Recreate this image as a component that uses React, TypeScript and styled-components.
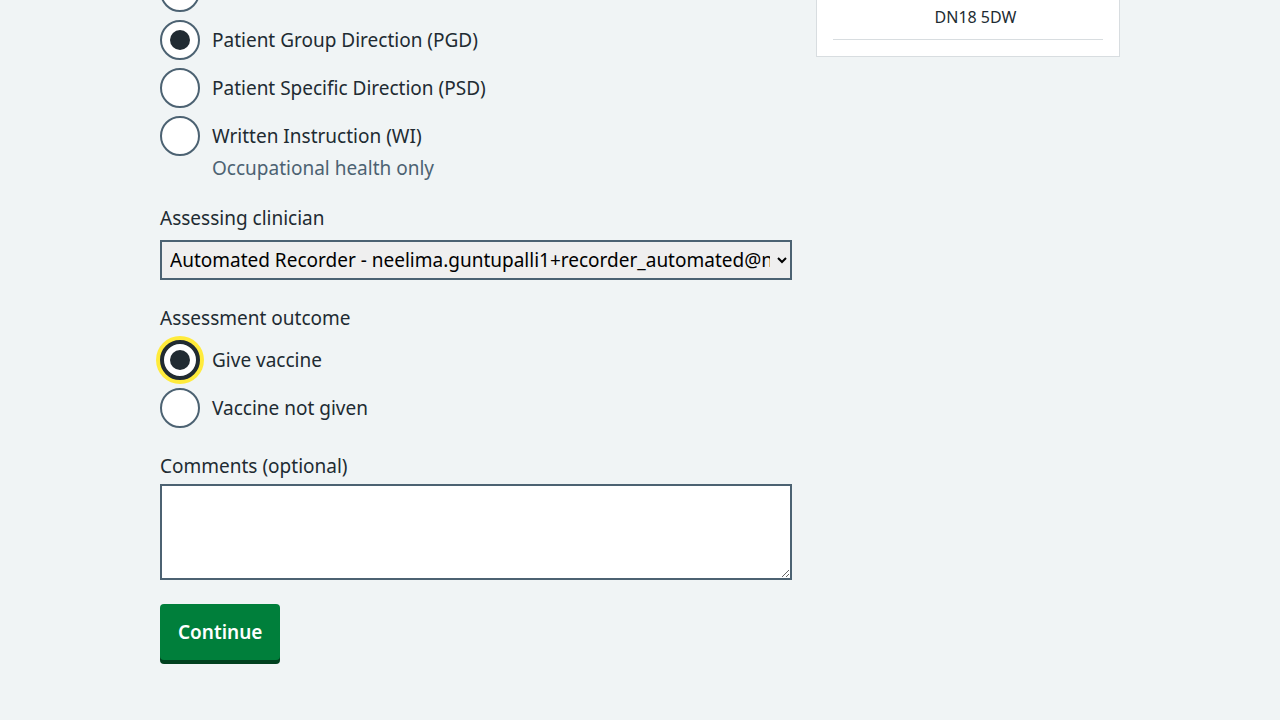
import React from "react";
import styled, { createGlobalStyle, css } from "styled-components";

const Global = createGlobalStyle`
  html, body { margin: 0; padding: 0; }
  body {
    background: #f0f4f5;
    color: #212b32;
    font-family: "Noto Sans", "Open Sans", Arial, sans-serif;
    overflow: hidden;
  }
  * { box-sizing: border-box; }
`;

const Page = styled.div`
  width: 960px;
  margin: -64px auto 0;
  display: grid;
  grid-template-columns: 632px 304px;
  column-gap: 24px;
  align-items: start;
`;

const Main = styled.form`
  display: flex;
  flex-direction: column;
  padding-bottom: 40px;
`;

const FormGroup = styled.div`
  display: flex;
  flex-direction: column;
  margin-bottom: 24px;
`;

const Label = styled.label<{ $gap?: number }>`
  font-size: 19px;
  line-height: 28px;
  margin-bottom: ${(p) => p.$gap ?? 8}px;
`;

const RadioList = styled.div`
  display: flex;
  flex-direction: column;
  gap: 8px;
`;

const RadioItem = styled.div`
  display: flex;
  flex-direction: column;
`;

const RadioRow = styled.label`
  display: flex;
  align-items: center;
  gap: 12px;
  font-size: 19px;
  line-height: 28px;
`;

const Circle = styled.span<{ $checked?: boolean; $focus?: boolean }>`
  width: 40px;
  height: 40px;
  flex: none;
  border-radius: 50%;
  background: #fff;
  border: 2px solid #4c6272;
  display: flex;
  align-items: center;
  justify-content: center;
  ${(p) =>
    p.$focus &&
    css`
      border: 4px solid #212b32;
      box-shadow: 0 0 0 4px #ffeb3b;
    `}
  &::after {
    content: "";
    width: 20px;
    height: 20px;
    border-radius: 50%;
    background: #212b32;
    display: ${(p) => (p.$checked ? "block" : "none")};
  }
`;

const Hint = styled.div`
  color: #4c6272;
  font-size: 19px;
  line-height: 24px;
  padding-left: 52px;
`;

const Select = styled.select`
  width: 100%;
  height: 40px;
  border: 2px solid #4c6272;
  background-color: #efefef;
  color: #000;
  font-family: inherit;
  font-size: 19px;
  padding: 0 4px;
  border-radius: 0;
`;

const TextArea = styled.textarea`
  width: 100%;
  height: 96px;
  border: 2px solid #4c6272;
  background: #fff;
  font-family: inherit;
  font-size: 19px;
  border-radius: 0;
  display: block;
`;

const Button = styled.button`
  align-self: flex-start;
  background: #007f3b;
  color: #fff;
  border: none;
  border-radius: 4px;
  box-shadow: 0 4px 0 #00401e;
  font-family: inherit;
  font-weight: 600;
  font-size: 19px;
  line-height: 28px;
  padding: 14px 18px;
  cursor: pointer;
`;

const Card = styled.aside`
  margin-top: -28px;
  background: #fff;
  border: 1px solid #d8dde0;
  padding: 16px;
  text-align: center;
  font-size: 16px;
  line-height: 24px;
`;

const CardLine = styled.div<{ $spaced?: boolean }>`
  ${(p) =>
    p.$spaced &&
    css`
      margin-top: 8px;
      padding-left: 15px;
    `}
`;

const Divider = styled.hr`
  border: none;
  border-top: 1px solid #d8dde0;
  margin: 10px 0 0;
`;

type Opt = { label: string; checked?: boolean; focus?: boolean; hint?: string };

const Radio = ({ label, checked, focus, hint }: Opt) => (
  <RadioItem>
    <RadioRow>
      <Circle $checked={checked} $focus={focus} />
      <span>{label}</span>
    </RadioRow>
    {hint && <Hint>{hint}</Hint>}
  </RadioItem>
);

export default function App() {
  return (
    <>
      <Global />
      <Page>
        <Main onSubmit={(e) => e.preventDefault()}>
          <FormGroup>
            <Label>Legal mechanism</Label>
            <RadioList>
              <Radio label="National Protocol" />
              <Radio label="Patient Group Direction (PGD)" checked />
              <Radio label="Patient Specific Direction (PSD)" />
              <Radio label="Written Instruction (WI)" hint="Occupational health only" />
            </RadioList>
          </FormGroup>
          <FormGroup>
            <Label $gap={8}>Assessing clinician</Label>
            <Select defaultValue="a">
              <option value="a">
                Automated Recorder - neelima.guntupalli1+recorder_automated@nhs.net
              </option>
            </Select>
          </FormGroup>
          <FormGroup>
            <Label>Assessment outcome</Label>
            <RadioList>
              <Radio label="Give vaccine" checked focus />
              <Radio label="Vaccine not given" />
            </RadioList>
          </FormGroup>
          <FormGroup>
            <Label $gap={4}>Comments (optional)</Label>
            <TextArea />
          </FormGroup>
          <Button type="submit">Continue</Button>
        </Main>
        <Card>
          <CardLine>Community Pharmacy</CardLine>
          <CardLine>1 High Street</CardLine>
          <CardLine>Scunthorpe</CardLine>
          <CardLine $spaced>DN18 5DW</CardLine>
          <Divider />
        </Card>
      </Page>
    </>
  );
}
